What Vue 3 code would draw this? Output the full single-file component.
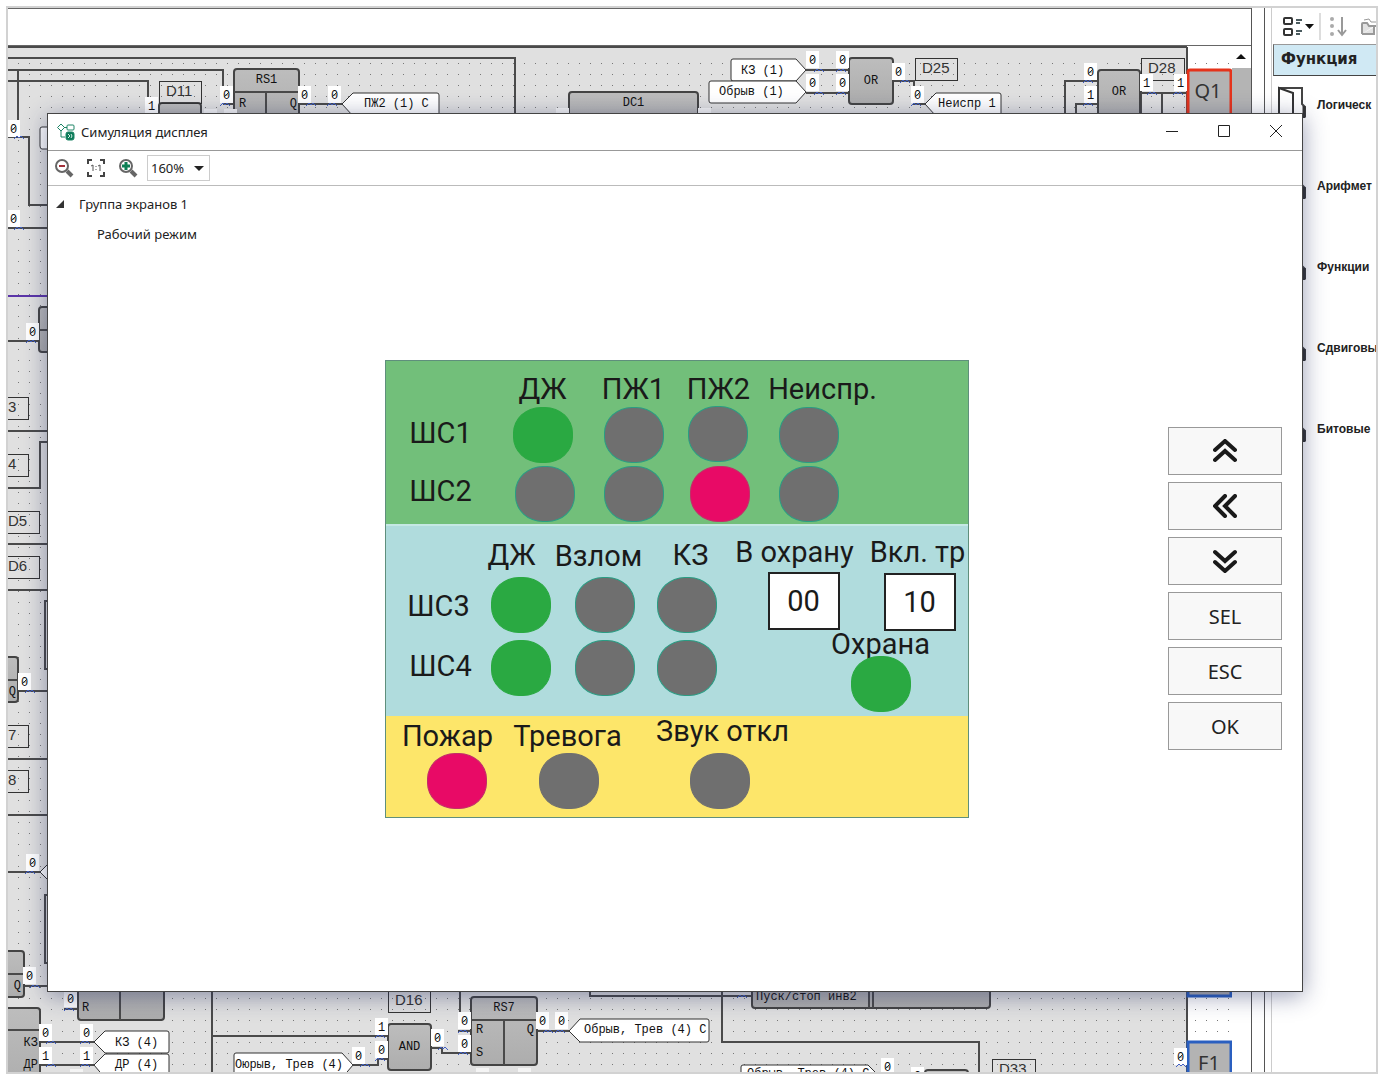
<script setup>
import { ref } from 'vue'

const wires = [
  'M8 58H515V120', 'M8 70H223V88', 'M18 70V122', 'M8 81H148V100', 'M8 137H29V205H50', 'M8 228H50',
  'M8 341H40', 'M8 431H50', 'M50 442H40V488H8', 'M8 544H50', 'M8 590H50', 'M50 601H45V669H50',
  'M18 691H50', 'M8 759H50', 'M8 815H50', 'M8 872H40', 'M50 895H45V963H50', 'M24 986H50',
  'M40 1042H94', 'M40 1065H94', 'M64 1009H78', 'M212 990V1080', 'M212 1036H388', 'M353 1065H378V1059H388',
  'M431 1048H442V1053H472', 'M460 990V1014', 'M458 1031H471', 'M537 1031H569', 'M590 990V996H752',
  'M722 990V1042H979V1080', 'M223 104H234', 'M299 104H342', 'M806 70H849', 'M806 93H849',
  'M893 81H914V104H925', 'M1098 81H1065V120', 'M1098 104H1076V120', 'M1140 93H1188', 'M1162 93V120',
  'M1141 80V120', 'M1187 47V1080', 'M8 47H1187'
]

const blocks = [
  { x: 159, y: 103, w: 42, h: 20 },
  { x: 234, y: 69, w: 65, h: 60, title: 'RS1', head: 23, mid: 32, pins: [['R', 5, 38, 'start'], ['Q', 63, 38, 'end']] },
  { x: 569, y: 92, w: 129, h: 40, title: 'DC1' },
  { x: 849, y: 58, w: 44, h: 46, center: 'OR' },
  { x: 1098, y: 70, w: 42, h: 50, center: 'OR', cy: 25 },
  { x: 39, y: 307, w: 30, h: 45, head: 23 },
  { x: 0, y: 657, w: 18, h: 45, head: 23, pins: [['Q', 16, 38, 'end']] },
  { x: 0, y: 951, w: 24, h: 46, head: 23, pins: [['Q', 21, 38, 'end']] },
  { x: 0, y: 1008, w: 40, h: 80, head: 22, pins: [['КЗ', 38, 38, 'end'], ['ДР', 38, 60, 'end']] },
  { x: 78, y: 960, w: 86, h: 60, mid: 42, pins: [['R', 4, 51, 'start']] },
  { x: 388, y: 1024, w: 43, h: 46, center: 'AND' },
  { x: 471, y: 997, w: 66, h: 68, title: 'RS7', head: 23, mid: 33, pins: [['R', 5, 36, 'start'], ['S', 5, 59, 'start'], ['Q', 63, 36, 'end']] },
  { x: 752, y: 960, w: 238, h: 48, mid: 117, mid2: 121, pins: [['Пуск/стоп инв2', 4, 40, 'start']] },
  { x: 925, y: 1070, w: 43, h: 20 }
]

const tags = [
  ['D11', 159, 81, 42], ['D25', 915, 58, 42], ['D28', 1141, 58, 43], ['3', 0, 397, 28], ['4', 0, 454, 28],
  ['D5', 0, 511, 39], ['D6', 0, 556, 39], ['7', 0, 725, 28], ['8', 0, 770, 28], ['D16', 388, 990, 42], ['D33', 992, 1059, 43]
]

const flags = [
  { d: 'M342 104L353 93H437Q439 93 439 95V116H353Z', t: 'ПЖ2 (1) С', x: 364, y: 107 },
  { d: 'M806 70L796 59H733Q731 59 731 61V79Q731 81 733 81H796Z', t: 'КЗ (1)', x: 741, y: 74 },
  { d: 'M806 92L796 81H711Q709 81 709 83V101Q709 103 711 103H796Z', t: 'Обрыв (1)', x: 719, y: 95 },
  { d: 'M925 104L936 93H999Q1001 93 1001 95V116H936Z', t: 'Неиспр 1', x: 938, y: 107 },
  { d: 'M60 127H42Q40 127 40 129V146Q40 149 42 149H60Z' },
  { d: 'M40 872L52 860V884Z' },
  { d: 'M94 1042L105 1031H167Q169 1031 169 1033V1051Q169 1053 167 1053H105Z', t: 'КЗ (4)', x: 115, y: 1046 },
  { d: 'M94 1065L105 1054H167Q169 1054 169 1056V1078H105Z', t: 'ДР (4)', x: 115, y: 1068 },
  { d: 'M353 1065L342 1053H236Q234 1053 234 1055V1078H342Z', t: 'Оюрыв, Трев (4)', x: 235, y: 1068 },
  { d: 'M569 1031L580 1019H707Q709 1019 709 1021V1040Q709 1042 707 1042H580Z', t: 'Обрыв, Трев (4) С', x: 584, y: 1033 },
  { d: 'M880 1077L868 1065H743Q741 1065 741 1067V1090H868Z', t: 'Обрыв, Трев (4) С', x: 747, y: 1077 }
]

// value, left, top of each signal state
const states = [
  ['0', 220, 86], ['0', 298, 86], ['0', 328, 86], ['1', 145, 97], ['0', 7, 120], ['0', 7, 210], ['0', 26, 323],
  ['0', 18, 673], ['0', 26, 854], ['0', 23, 967], ['0', 64, 990], ['0', 39, 1024], ['1', 39, 1047], ['0', 80, 1024],
  ['1', 80, 1047], ['1', 375, 1018], ['0', 375, 1041], ['0', 352, 1047], ['0', 431, 1029], ['0', 458, 1012],
  ['0', 458, 1035], ['0', 536, 1012], ['0', 555, 1012], ['0', 806, 51], ['0', 836, 51], ['0', 806, 74],
  ['0', 836, 74], ['0', 892, 63], ['0', 911, 86], ['0', 1084, 63], ['1', 1084, 86], ['1', 1140, 74],
  ['1', 1174, 74], ['0', 881, 1058], ['0', 911, 1067], ['0', 1174, 1048]
]

const marks = [
  [220, 104], [306, 104], [327, 104], [14, 137], [14, 228], [26, 341], [25, 691], [25, 872], [30, 986], [64, 1009],
  [46, 1042], [80, 1042], [46, 1065], [80, 1065], [375, 1036], [375, 1059], [360, 1065], [438, 1048], [458, 1031],
  [458, 1053], [543, 1031], [555, 1031], [814, 70], [836, 70], [814, 93], [836, 93], [900, 81], [911, 104],
  [1083, 81], [1083, 104], [1147, 93], [1173, 93], [737, 996], [1176, 1065]
]

const stubs = [[556, 108], [698, 108], [204, 109], [224, 109], [476, 1068], [518, 1068], [70, 1069]]

const categories = ['Логическ', 'Арифмет', 'Функции', 'Сдвиговы', 'Битовые']

const zoom = ref('160%')

const captions = [
  ['ДЖ', 157, 10], ['ПЖ1', 248, 10], ['ПЖ2', 333, 10], ['Неиспр.', 437, 10], ['ШС1', 55, 54], ['ШС2', 55, 112],
  ['ДЖ', 126, 176], ['Взлом', 213, 177], ['КЗ', 305, 176], ['В охрану', 409, 173], ['Вкл. тр', 532, 173],
  ['ШС3', 53, 227], ['ШС4', 55, 287], ['Охрана', 495, 265], ['Пожар', 62, 357], ['Тревога', 182, 357], ['Звук откл', 337, 352]
]

const lamps = [
  ['on', 127, 46], ['off', 218, 46], ['off', 302, 45], ['off', 393, 46],
  ['off', 129, 105], ['off', 218, 105], ['alarm', 304, 105], ['off', 393, 105],
  ['on', 105, 216], ['off', 189, 216], ['off', 271, 216],
  ['on', 105, 279], ['off', 189, 279], ['off', 271, 279], ['on', 465, 295],
  ['alarm', 41, 392], ['off plain', 153, 392], ['off plain', 304, 392]
]

const fields = ref([
  { label: 'В охрану', value: '00', x: 382, y: 211 },
  { label: 'Вкл. тр', value: '10', x: 498, y: 212 }
])

const arrowKeys = [
  { label: 'Вверх', d: 'M2 11L12 2L22 11M2 21L12 12L22 21' },
  { label: 'Назад', d: 'M12 2L2 12L12 22M22 2L12 12L22 22' },
  { label: 'Вниз', d: 'M2 3L12 12L22 3M2 13L12 22L22 13' }
]
</script>

<template>
  <div class="page">
    <div class="ide">
      <main class="editor">
        <div class="docbar"></div>
        <div class="sheet">
          <svg class="diagram" role="img" aria-label="Схема">
            <defs>
              <pattern id="dots" width="11" height="11" patternUnits="userSpaceOnUse" x="2" y="3">
                <rect x="5" y="5" width="1" height="1" fill="#777" />
              </pattern>
              <linearGradient id="metal" x1="0" y1="0" x2="0" y2="1">
                <stop offset="0" stop-color="#bdbdbd" />
                <stop offset="1" stop-color="#adadad" />
              </linearGradient>
            </defs>
            <g transform="translate(-8 -46)">
              <rect x="8" y="47" width="1180" height="1040" fill="#e0e0e0" />
              <rect x="8" y="62" width="1223" height="1030" fill="url(#dots)" />
              <path v-for="d in wires" :key="d" :d="d" class="wire" />
              <path d="M8 296H50" class="wire purple" />
              <g v-for="(b, i) in blocks" :key="i" :transform="`translate(${b.x} ${b.y})`">
                <rect :width="b.w" :height="b.h" rx="3" class="block" />
                <path v-if="b.head" :d="`M0 ${b.head}H${b.w}`" class="wire" />
                <path v-if="b.mid" :d="`M${b.mid} ${b.head || 0}V${b.h}`" class="wire" />
                <path v-if="b.mid2" :d="`M${b.mid2} 0V${b.h}`" class="wire" />
                <text v-if="b.title" :x="b.w / 2" y="14" class="mono mid">{{ b.title }}</text>
                <text v-if="b.center" :x="b.w / 2" :y="b.cy || 26" class="mono mid">{{ b.center }}</text>
                <text v-for="p in b.pins || []" :key="p[0] + p[2]" :x="p[1]" :y="p[2]" :text-anchor="p[3]" class="mono">{{ p[0] }}</text>
              </g>
              <g v-for="t in tags" :key="t[0]">
                <rect :x="t[1]" :y="t[2]" :width="t[3]" height="22" class="tag" />
                <text :x="t[1] + (t[3] > 40 ? 7 : 8)" :y="t[2] + 15" class="tagtext">{{ t[0] }}</text>
              </g>
              <g v-for="(f, i) in flags" :key="i">
                <path :d="f.d" class="flag" />
                <text v-if="f.t" :x="f.x" :y="f.y" class="mono">{{ f.t }}</text>
              </g>
              <g class="red">
                <rect x="1188" y="70" width="43" height="60" rx="2" />
                <text x="1208" y="98" class="port">Q1</text>
              </g>
              <g class="blue">
                <rect x="1188" y="950" width="43" height="46" />
                <rect x="1188" y="1042" width="43" height="60" />
                <text x="1209" y="1070" class="port">F1</text>
              </g>
              <g v-for="(s, i) in states" :key="i">
                <rect :x="s[1]" :y="s[2]" width="13" height="17" fill="#fff" />
                <text :x="s[1] + 3" :y="s[2] + 13" class="digit">{{ s[0] }}</text>
                <path v-if="s[0] === '0'" :d="`M${s[1] + 4} ${s[2] + 11}l5 -5`" class="slash" />
              </g>
              <rect v-for="(s, i) in stubs" :key="'s' + i" :x="s[0]" :y="s[1]" width="13" height="12" fill="#f4f4f4" />
              <path v-for="(m, i) in marks" :key="'m' + i" :d="`M${m[0]} ${m[1] + 2}l3 -3l2 2l2 -2l3 3`" class="mark" />
            </g>
          </svg>
          <div class="scroll">
            <svg width="19" height="22"><path d="M4 13L9 8L14 13Z" fill="#111" /></svg>
            <div class="thumb"></div>
          </div>
        </div>
      </main>
      <div class="gutter"></div>
      <aside class="side">
        <div class="sidebar-tools">
          <svg width="103" height="36" fill="none">
            <g stroke="#333" stroke-width="2">
              <rect x="11" y="10" width="8" height="6" rx="1" /><rect x="11" y="21" width="8" height="6" rx="1" />
            </g>
            <path d="M23 12H29M23 15H27M23 23H29M23 26H27" stroke="#4a5a5e" stroke-width="2" />
            <path d="M32 16H41L36.5 21Z" fill="#111" />
            <path d="M47 5V32" stroke="#bbb" />
            <g fill="#aaa"><circle cx="59" cy="11" r="2" /><circle cx="59" cy="18" r="2" /><circle cx="59" cy="26" r="2" /></g>
            <path d="M69 9V26M65 22L69 27L73 22" stroke="#999" stroke-width="2" />
            <path d="M89 26V16Q89 15 90 15H94L96 18H103M89 26H101V18" fill="#e2e2e2" stroke="#999" stroke-width="2" />
            <path d="M91 12L96 11L98 14H103" stroke="#999" />
          </svg>
        </div>
        <h2>Функция</h2>
        <ul>
          <li v-for="c in categories" :key="c">
            <svg width="32" height="34" fill="none" stroke="#333" stroke-width="2">
              <path d="M2 2H25V18L28 21V31" stroke="#444" />
              <path d="M2 2V32H16V7L2 2Z" fill="#fff" />
              <path d="M27 20V32" stroke-width="3" />
            </svg>
            <span>{{ c }}</span>
          </li>
        </ul>
      </aside>
    </div>

    <section class="dialog" role="dialog" aria-labelledby="dlg-title">
      <header class="titlebar">
        <svg width="18" height="18" viewBox="0 0 18 18" fill="none" stroke="#1c8465">
          <path d="M4 1L7.5 4.5L4 8L.5 4.5Z" />
          <rect x="10" y="2" width="7" height="5" rx="1" />
          <path d="M7 4.5H10M4 8V14H8" />
          <rect x="9" y="9" width="8" height="8" rx="2" fill="#0b7a58" />
          <path d="M11 11L13 13L11 15M14 11L15 13L14 15" stroke="#d5f0e6" />
        </svg>
        <h1 id="dlg-title">Симуляция дисплея</h1>
        <div class="winbtns">
          <button type="button" aria-label="Свернуть"><svg width="12" height="12"><path d="M0 6.5H12" /></svg></button>
          <button type="button" aria-label="Развернуть"><svg width="12" height="12"><path d="M.5 .5H11.5V11.5H.5Z" /></svg></button>
          <button type="button" aria-label="Закрыть"><svg width="12" height="12"><path d="M0 0L12 12M12 0L0 12" /></svg></button>
        </div>
      </header>

      <div class="toolbar">
        <button type="button" aria-label="Уменьшить">
          <svg width="20" height="20" fill="none">
            <circle cx="8" cy="8" r="6" stroke="#666" stroke-width="2" /><path d="M13 13L18 18" stroke="#666" stroke-width="4" />
            <path d="M5 8H11" stroke="#a3303a" stroke-width="2" />
          </svg>
        </button>
        <button type="button" aria-label="Масштаб 1:1">
          <svg width="20" height="20" fill="none">
            <path d="M2 6V2H6M14 2H18V6M18 14V18H14M6 18H2V14" stroke="#444" stroke-width="2" />
            <path d="M5 8L7 7V13M12 8L14 7V13M10 8V9M10 11V12" stroke="#555" />
          </svg>
        </button>
        <button type="button" aria-label="Увеличить">
          <svg width="20" height="20" fill="none">
            <circle cx="8" cy="8" r="6" stroke="#666" stroke-width="2" /><path d="M13 13L18 18" stroke="#666" stroke-width="4" />
            <path d="M4 8H12M8 4V12" stroke="#0d7f55" stroke-width="3" />
          </svg>
        </button>
        <div class="picker">
          <select v-model="zoom" aria-label="Масштаб"><option>100%</option><option>160%</option></select>
          <svg width="10" height="6"><path d="M0 0H10L5 5Z" fill="#222" /></svg>
        </div>
      </div>

      <div class="body">
        <div class="tree">
          <div class="node">
            <svg width="9" height="9"><path d="M8 0V8H0Z" fill="#333" /></svg>
            <span>Группа экранов 1</span>
          </div>
          <div class="node child">Рабочий режим</div>
        </div>

        <div class="lcd">
          <div class="band green"></div>
          <div class="band aqua"></div>
          <div class="band yellow"></div>
          <span v-for="(c, i) in captions" :key="'c' + i" class="caption" :style="{ left: c[1] + 'px', top: c[2] + 'px' }">{{ c[0] }}</span>
          <i v-for="(l, i) in lamps" :key="'l' + i" class="lamp" :class="l[0]" :style="{ left: l[1] + 'px', top: l[2] + 'px' }"></i>
          <input v-for="f in fields" :key="f.label" v-model="f.value" :aria-label="f.label" :style="{ left: f.x + 'px', top: f.y + 'px' }" />
        </div>

        <div class="keypad">
          <button v-for="k in arrowKeys" :key="k.label" type="button" :aria-label="k.label">
            <svg width="24" height="24" fill="none" stroke="#1a1a1a" stroke-width="4" stroke-linecap="round"><path :d="k.d" /></svg>
          </button>
          <button type="button">SEL</button>
          <button type="button">ESC</button>
          <button type="button">OK</button>
        </div>
      </div>
    </section>
  </div>
</template>

<style>
body { background: #fff; }
</style>

<style scoped>
* { box-sizing: border-box; }
.page {
  position: relative;
  display: flex;
  height: 100vh;
  padding: 6px 5px 5px 6px;
  font-family: "Noto Sans", "Open Sans", sans-serif;
  color: #222;
  overflow: hidden;
}
.ide { flex: 1; display: flex; min-width: 0; border: 2px solid #d2d2d2; overflow: hidden; }
.editor { flex: 1; min-width: 0; display: flex; flex-direction: column; border-right: 1px solid #555; }
.docbar { height: 38px; flex: none; border-top: 1px solid #666; border-bottom: 1px solid #666; }
.sheet { flex: 1; min-height: 0; display: flex; }
.diagram { flex: 1; min-width: 0; height: 100%; }
.wire { fill: none; stroke: #4a4a4a; stroke-width: 2px; shape-rendering: crispEdges; }
.purple { stroke: #5b35a8; }
.block { fill: url(#metal); stroke: #444; stroke-width: 2px; }
.flag { fill: #fff; stroke: #333; stroke-width: 1px; }
.tag { fill: none; stroke: #333; stroke-width: 1px; shape-rendering: crispEdges; }
.tagtext { font: 15px "Liberation Sans", sans-serif; fill: #333; }
.mono { font: 12px "Liberation Mono", monospace; fill: #111; stroke: none; }
.mid { text-anchor: middle; }
.digit { font: 12px "Liberation Mono", monospace; fill: #111; }
.slash { stroke: #333; stroke-width: 1px; }
.mark { fill: none; stroke: #3f5ec4; stroke-width: 1px; }
.port { font: 20px "Noto Sans", sans-serif; fill: #333; text-anchor: middle; }
.red rect { fill: #b3b3b3; stroke: #e5331b; stroke-width: 3px; }
.blue rect { fill: #b3b3b3; stroke: #2a5fc0; stroke-width: 3px; }
.scroll { width: 19px; display: flex; flex-direction: column; }
.thumb { height: 400px; background: #b4b4b4; }
.gutter { flex: none; width: 8px; margin-left: 12px; border-left: 1px solid #555; border-right: 1px solid #ccc; }
.side { width: 104px; flex: none; padding-left: 1px; overflow: hidden; }
.sidebar-tools { height: 36px; }
.side h2 {
  margin: 0;
  height: 32px;
  padding-left: 7px;
  border-left: 1px solid #666;
  border-top: 1px solid #999;
  border-bottom: 1px solid #444;
  background: #d0e9f4;
  font: bold 15px/28px "DejaVu Sans", sans-serif;
  color: #222;
}
.side ul { margin: 0; padding: 10px 0 0 4px; list-style: none; }
.side li { height: 81px; display: flex; gap: 8px; align-items: flex-start; }
.side li svg { flex: none; }
.side li span { padding-top: 11px; font: bold 12px/16px "Liberation Sans", sans-serif; white-space: nowrap; }

.dialog {
  position: absolute;
  left: 47px;
  right: 80px;
  top: 113px;
  bottom: 87px;
  display: flex;
  flex-direction: column;
  border: 1px solid #444;
  background: #fff;
  box-shadow: 0 4px 22px rgba(30, 40, 90, .45);
}
.titlebar { height: 37px; flex: none; display: flex; align-items: center; gap: 6px; padding-left: 9px; border-bottom: 1px solid #999; }
.titlebar h1 { flex: 1; margin: 0; font-size: 13px; font-weight: 400; line-height: 20px; }
.winbtns { display: flex; height: 100%; }
.winbtns button { width: 52px; padding: 0 0 2px; border: 0; background: none; display: grid; place-items: center; }
.winbtns path { fill: none; stroke: #222; }
.toolbar { height: 35px; flex: none; display: flex; align-items: center; gap: 12px; padding-left: 6px; border-bottom: 1px solid #bbb; }
.toolbar button { width: 20px; height: 20px; padding: 0; border: 0; background: none; display: block; }
.toolbar button svg { display: block; }
.picker { position: relative; margin-left: -3px; }
.picker select {
  appearance: none;
  width: 63px;
  height: 26px;
  padding: 0 0 0 3px;
  border: 1px solid #ccc;
  border-radius: 0;
  background: #fff;
  font: 13px/24px "Noto Sans", sans-serif;
  color: #222;
}
.picker svg { position: absolute; right: 6px; top: 11px; pointer-events: none; }
.body { flex: 1; min-height: 0; display: grid; grid-template-columns: 1fr 584px 1fr; align-items: center; padding-left: 3px; }
.tree { align-self: start; padding: 3px 0 0 5px; font-size: 13px; line-height: 30px; }
.node { display: flex; align-items: center; gap: 14px; }
.child { padding-left: 41px; }
.lcd { position: relative; border: 1px solid #5f8f7c; }
.green { height: 163px; background: #72bf7a; }
.aqua { height: 192px; background: #b0dcdd; border-top: 2px solid #c5e8e4; }
.yellow { height: 101px; background: #fde66a; }
.caption { position: absolute; transform: translateX(-50%); font: 29px/36px Roboto, sans-serif; color: #1a1a1a; white-space: nowrap; }
.lamp { position: absolute; width: 60px; height: 56px; border-radius: 28px / 26px; border: 1px solid #2a9d84; background: #6f6f6f; }
.on { background: #2aa942; border-color: #2aa942; }
.alarm { background: #e80a66; border-color: #c03068; }
.plain { border-color: #6f6f6f; }
.lcd input {
  position: absolute;
  width: 72px;
  height: 58px;
  padding: 0;
  border: 2px solid #222;
  background: #fff;
  text-align: center;
  font: 29px Roboto, sans-serif;
  color: #1a1a1a;
}
.keypad { justify-self: end; margin-right: 20px; display: flex; flex-direction: column; gap: 7px; }
.keypad button {
  width: 114px;
  height: 48px;
  padding: 0;
  display: grid;
  place-items: center;
  border: 1px solid #999;
  background: #f8f8f8;
  font: 20px "Noto Sans", sans-serif;
  color: #222;
}
</style>
